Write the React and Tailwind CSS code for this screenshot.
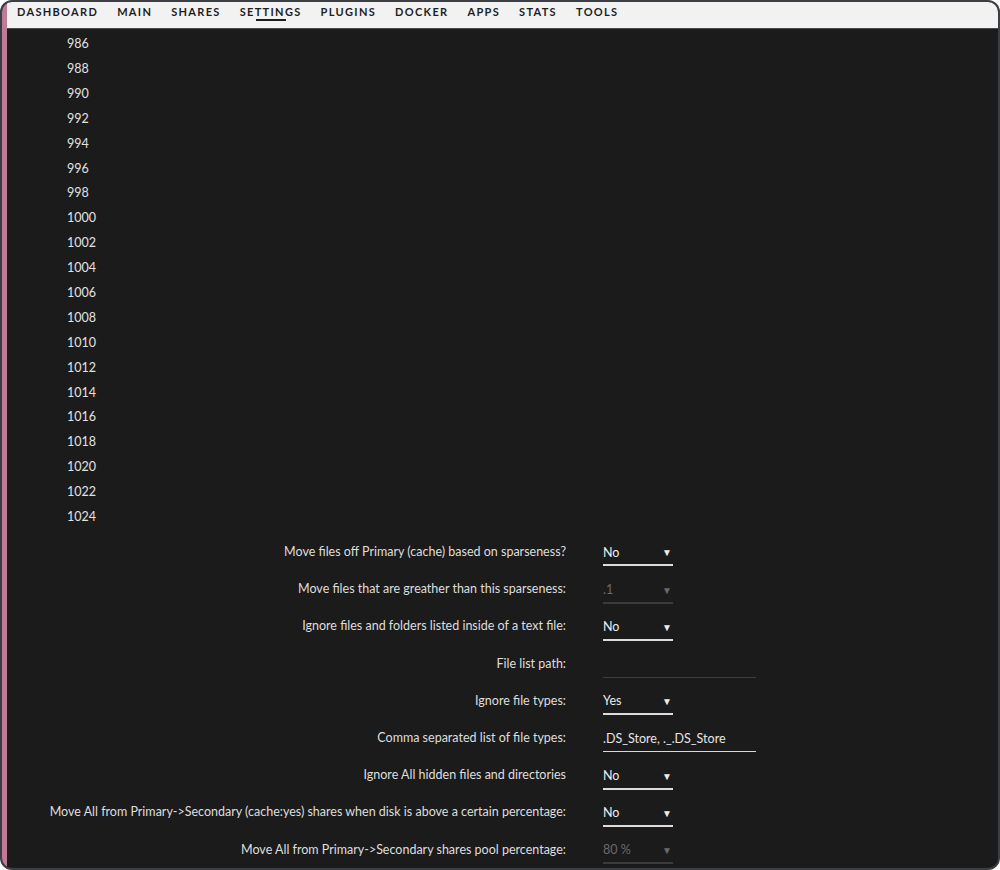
const navItems = ["DASHBOARD", "MAIN", "SHARES", "SETTINGS", "PLUGINS", "DOCKER", "APPS", "STATS", "TOOLS"];

const numbers = [];
for (let n = 986; n <= 1024; n += 2) numbers.push(n);

const rows = [
  { label: "Move files off Primary (cache) based on sparseness?", type: "select", value: "No" },
  { label: "Move files that are greather than this sparseness:", type: "select", value: ".1", disabled: true },
  { label: "Ignore files and folders listed inside of a text file:", type: "select", value: "No" },
  { label: "File list path:", type: "text", value: "", disabled: true },
  { label: "Ignore file types:", type: "select", value: "Yes" },
  { label: "Comma separated list of file types:", type: "text", value: ".DS_Store, ._.DS_Store" },
  { label: "Ignore All hidden files and directories", type: "select", value: "No" },
  { label: "Move All from Primary->Secondary (cache:yes) shares when disk is above a certain percentage:", type: "select", value: "No" },
  { label: "Move All from Primary->Secondary shares pool percentage:", type: "select", value: "80 %", disabled: true },
];

function Field({ row }) {
  if (row.type === "text") {
    return (
      <div
        className={
          "w-[153px] h-[25px] flex items-center border-b " +
          (row.disabled ? "border-[#3d3d3d]" : "border-[#d8d8d8]")
        }
      >
        <span className="text-[#e6e6e6]">{row.value}</span>
      </div>
    );
  }
  return (
    <div
      className={
        "w-[70px] h-[25px] flex items-center justify-between border-b-2 " +
        (row.disabled ? "border-[#3a3a3a] text-[#6a6a6a]" : "border-[#dcdcdc] text-[#ececec]")
      }
    >
      <span>{row.value}</span>
      <span className="text-[10px] mr-[1px]">▼</span>
    </div>
  );
}

export default function App() {
  return (
    <div className="w-[1000px] h-[870px] bg-white" style={{ fontFamily: "Lato, 'Liberation Sans', sans-serif" }}>
      <div className="h-full rounded-[12px] border-2 border-[#3b3e42] overflow-hidden flex bg-[#1c1b1c]">
        <div className="w-[5px] shrink-0 bg-[#bf7a9a]" />
        <div className="flex-1 flex flex-col min-w-0">
          <nav className="h-[27px] shrink-0 bg-[#f2f2f2] border-b border-[#4a4a4a] flex items-start pl-[10px] gap-[19px]">
            {navItems.map((item) => (
              <div key={item} className="relative pt-[1px] leading-[13px]">
                <span className="text-[11px] font-bold tracking-[0.12em] text-[#1e1e1e]">{item}</span>
                {item === "SETTINGS" && (
                  <div className="absolute left-1/2 -translate-x-1/2 top-[17px] w-[30px] h-[2px] bg-[#1e1e1e]" />
                )}
              </div>
            ))}
          </nav>
          <div className="flex-1 pt-[3px] text-[12.5px]">
            <div className="pl-[60px]">
              {numbers.map((n) => (
                <div key={n} className="h-[24.9px] flex items-center text-[#e2e2e2]">
                  {n}
                </div>
              ))}
            </div>
            <div className="pt-[4px]">
              {rows.map((row) => (
                <div key={row.label} className="h-[37.2px] flex items-center">
                  <div className="w-[559px] text-right text-[#dedede]">{row.label}</div>
                  <div className="ml-[37px] pt-[3px]">
                    <Field row={row} />
                  </div>
                </div>
              ))}
            </div>
          </div>
        </div>
      </div>
    </div>
  );
}
